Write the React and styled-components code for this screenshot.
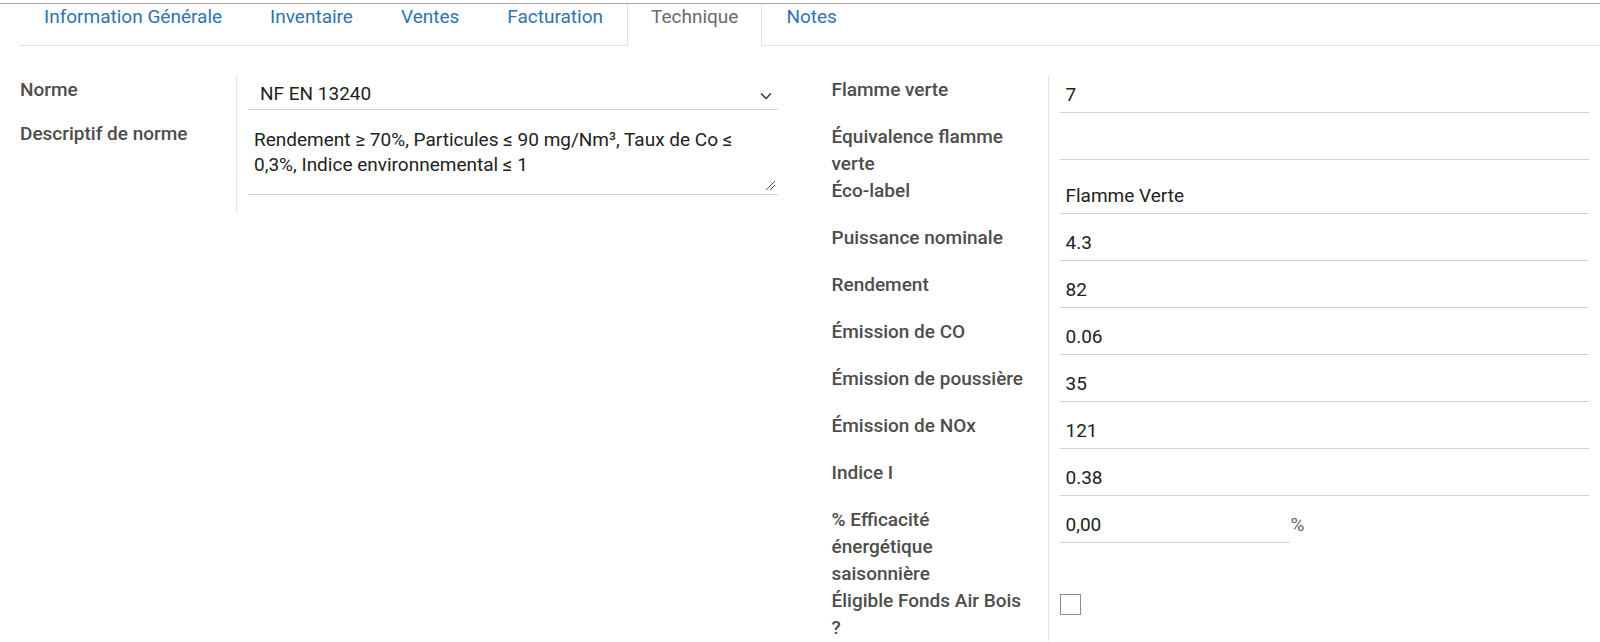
import React from "react";
import styled, { createGlobalStyle } from "styled-components";

const GlobalStyle = createGlobalStyle`
  html, body { margin: 0; padding: 0; background: #ffffff; }
  body {
    font-family: Roboto, "Noto Sans", "Liberation Sans", sans-serif;
    font-size: 19px;
    color: #212529;
  }
  * { box-sizing: border-box; }
`;

const Page = styled.div`
  padding-top: 3px;
  width: 1600px;
`;

const TopRule = styled.div`
  border-top: 1px solid #a9a9a9;
`;

const TabBar = styled.nav`
  display: flex;
  margin-left: 20px;
  border-bottom: 1px solid #dee2e6;
  height: 42px;
`;

const Tab = styled.div`
  padding: 0 23px;
  line-height: 25px;
  font-size: 19px;
  color: ${(p) => (p.$active ? "#6b6b6b" : "#2f73b5")};
  background: #fff;
  border-left: 1px solid ${(p) => (p.$active ? "#dee2e6" : "transparent")};
  border-right: 1px solid ${(p) => (p.$active ? "#dee2e6" : "transparent")};
  margin-bottom: ${(p) => (p.$active ? "-1px" : "0")};
  height: ${(p) => (p.$active ? "42px" : "41px")};
  white-space: nowrap;
`;

const Form = styled.div`
  display: grid;
  grid-template-columns: 1fr 1fr;
  column-gap: 54px;
  padding: 30px 11px 0 20px;
  align-items: start;
`;

const Group = styled.div`
  display: grid;
  grid-template-columns: 217px 1fr;
`;

const Label = styled.div`
  border-right: 1px solid #e4e4e4;
  font-weight: 500;
  font-size: 19px;
  line-height: 27px;
  color: #4d4d4d;
  white-space: nowrap;
`;

const FieldCell = styled.div`
  padding-left: 11px;
  min-width: 0;
`;

const Input = styled.div`
  margin-top: 4px;
  margin-bottom: 10px;
  height: 33px;
  padding: 4px 6px 0;
  line-height: 22px;
  font-size: 19px;
  color: #222;
  border-bottom: 1px solid #d2d2d2;
  width: ${(p) => p.$width || "100%"};
  white-space: nowrap;
`;

const InlineRow = styled.div`
  display: flex;
  align-items: flex-start;
`;

const Unit = styled.span`
  margin-top: 8px;
  margin-left: 1px;
  font-size: 19px;
  line-height: 22px;
  color: #666;
`;

const Select = styled.div`
  margin-top: 3px;
  margin-bottom: 10px;
  height: 31px;
  padding: 4px 6px 0 12px;
  display: flex;
  align-items: flex-start;
  justify-content: space-between;
  font-size: 19px;
  line-height: 22px;
  color: #222;
  border-bottom: 1px solid #d2d2d2;
`;

const Chevron = styled.svg`
  margin-top: 9px;
  flex: none;
`;

const TextArea = styled.div`
  position: relative;
  margin-top: 3px;
  margin-bottom: 17px;
  padding: 4px 6px 17px;
  font-size: 19px;
  line-height: 25px;
  color: #222;
  border-bottom: 1px solid #d2d2d2;
  white-space: nowrap;
`;

const ResizeHandle = styled.svg`
  position: absolute;
  right: 2px;
  bottom: 3px;
`;

const Checkbox = styled.div`
  margin-top: 7px;
  width: 21px;
  height: 21px;
  border: 1px solid #8c8c8c;
  background: #fff;
`;

const tabs = ["Information Générale", "Inventaire", "Ventes", "Facturation", "Technique", "Notes"];

const rightRows = [
  { label: ["Flamme verte"], value: "7" },
  { label: ["Équivalence flamme", "verte"], value: "" },
  { label: ["Éco-label"], value: "Flamme Verte" },
  { label: ["Puissance nominale"], value: "4.3" },
  { label: ["Rendement"], value: "82" },
  { label: ["Émission de CO"], value: "0.06" },
  { label: ["Émission de poussière"], value: "35" },
  { label: ["Émission de NOx"], value: "121" },
  { label: ["Indice I"], value: "0.38" },
];

function Lines({ lines }) {
  return lines.map((l, i) => (
    <React.Fragment key={i}>
      {i > 0 && <br />}
      {l}
    </React.Fragment>
  ));
}

export default function App() {
  return (
    <Page>
      <GlobalStyle />
      <TopRule />
      <TabBar>
        {tabs.map((t) => (
          <Tab key={t} $active={t === "Technique"}>
            {t}
          </Tab>
        ))}
      </TabBar>
      <Form>
        <Group>
          <Label>Norme</Label>
          <FieldCell>
            <Select>
              <span>NF EN 13240</span>
              <Chevron width="12" height="8" viewBox="0 0 12 8">
                <polyline points="1,1.5 6,6.5 11,1.5" fill="none" stroke="#333" strokeWidth="1.5" />
              </Chevron>
            </Select>
          </FieldCell>
          <Label>Descriptif de norme</Label>
          <FieldCell>
            <TextArea>
              Rendement ≥ 70%, Particules ≤ 90 mg/Nm³, Taux de Co ≤
              <br />
              0,3%, Indice environnemental ≤ 1
              <ResizeHandle width="12" height="12" viewBox="0 0 12 12">
                <line x1="11" y1="2" x2="2" y2="11" stroke="#555" strokeWidth="1" />
                <line x1="11" y1="6" x2="6" y2="11" stroke="#555" strokeWidth="1" />
              </ResizeHandle>
            </TextArea>
          </FieldCell>
        </Group>
        <Group>
          {rightRows.map((r, i) => (
            <React.Fragment key={i}>
              <Label>
                <Lines lines={r.label} />
              </Label>
              <FieldCell>
                <Input>{r.value}</Input>
              </FieldCell>
            </React.Fragment>
          ))}
          <Label>
            <Lines lines={["% Efficacité", "énergétique", "saisonnière"]} />
          </Label>
          <FieldCell>
            <InlineRow>
              <Input $width="230px">0,00</Input>
              <Unit>%</Unit>
            </InlineRow>
          </FieldCell>
          <Label>
            <Lines lines={["Éligible Fonds Air Bois", "?"]} />
          </Label>
          <FieldCell>
            <Checkbox />
          </FieldCell>
        </Group>
      </Form>
    </Page>
  );
}
